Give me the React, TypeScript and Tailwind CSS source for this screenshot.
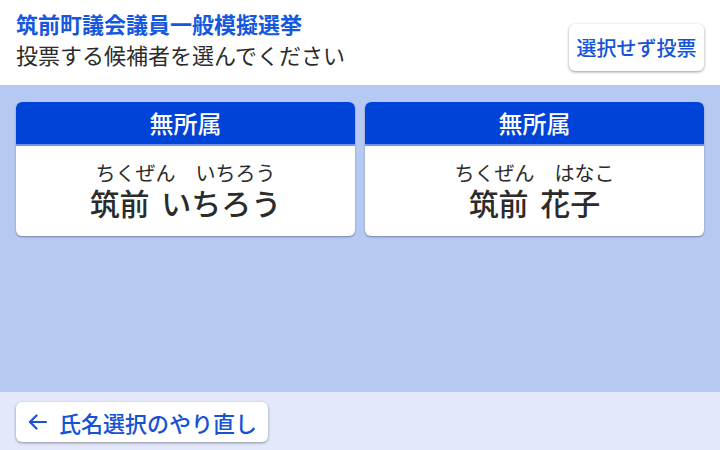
import React from 'react';

const font = { fontFamily: '"Noto Sans CJK JP", "Noto Sans", sans-serif' };

interface Candidate {
  party: string;
  kana: string;
  name: string;
}

const candidates: Candidate[] = [
  { party: '無所属', kana: 'ちくぜん　いちろう', name: '筑前 いちろう' },
  { party: '無所属', kana: 'ちくぜん　はなこ', name: '筑前 花子' },
];

const CandidateCard: React.FC<{ c: Candidate }> = ({ c }) => (
  <button className="flex flex-col overflow-hidden rounded-[6px] bg-white text-left shadow-[0_1px_2px_rgba(0,0,0,0.35)]">
    <div className="flex h-[44px] w-full items-center justify-center border-b-2 border-[#6f95e6] bg-[#0043d8] text-[24px] font-medium text-white">
      {c.party}
    </div>
    <div className="flex h-[90px] w-full flex-col items-center pt-[14px]">
      <span className="text-[20px] leading-[25px] text-[#2b2b2b]">{c.kana}</span>
      <span className="text-[30px] font-medium leading-[34px] text-[#2b2b2b] [word-spacing:5px]">{c.name}</span>
    </div>
  </button>
);

export default function App() {
  return (
    <div className="flex h-[450px] w-[720px] flex-col bg-white" style={font}>
      <header className="flex h-[85px] shrink-0 justify-between bg-white px-4 pt-2">
        <div className="flex flex-col gap-[1px]">
          <h1 className="text-[22px] font-bold leading-[30px] text-[#1557dd]">筑前町議会議員一般模擬選挙</h1>
          <p className="text-[22px] leading-[30px] text-[#2b2b2b]">投票する候補者を選んでください</p>
        </div>
        <button className="mt-[16px] h-[47px] w-[135px] rounded-[6px] bg-white text-[20px] font-medium text-[#1553d4] shadow-[0_1px_3px_rgba(0,0,0,0.4)]">
          選択せず投票
        </button>
      </header>

      <main className="grid flex-1 grid-cols-2 content-start gap-[10px] bg-[#b5c9f2] px-4 pt-[17px]">
        {candidates.map((c) => (
          <CandidateCard key={c.kana} c={c} />
        ))}
      </main>

      <footer className="h-[58px] shrink-0 bg-[#e3e9fb] px-4 pt-[10px]">
        <button className="flex h-[40px] w-[252px] items-center gap-[9px] rounded-[6px] bg-white pl-[10px] text-[22px] font-medium text-[#1553d4] shadow-[0_1px_3px_rgba(0,0,0,0.4)]">
          <svg width="24" height="24" viewBox="0 0 24 24" fill="none" stroke="currentColor" strokeWidth="2.2" strokeLinecap="round" strokeLinejoin="round">
            <path d="M20 12H4" />
            <path d="M10.5 5.5L4 12l6.5 6.5" />
          </svg>
          <span>氏名選択のやり直し</span>
        </button>
      </footer>
    </div>
  );
}
